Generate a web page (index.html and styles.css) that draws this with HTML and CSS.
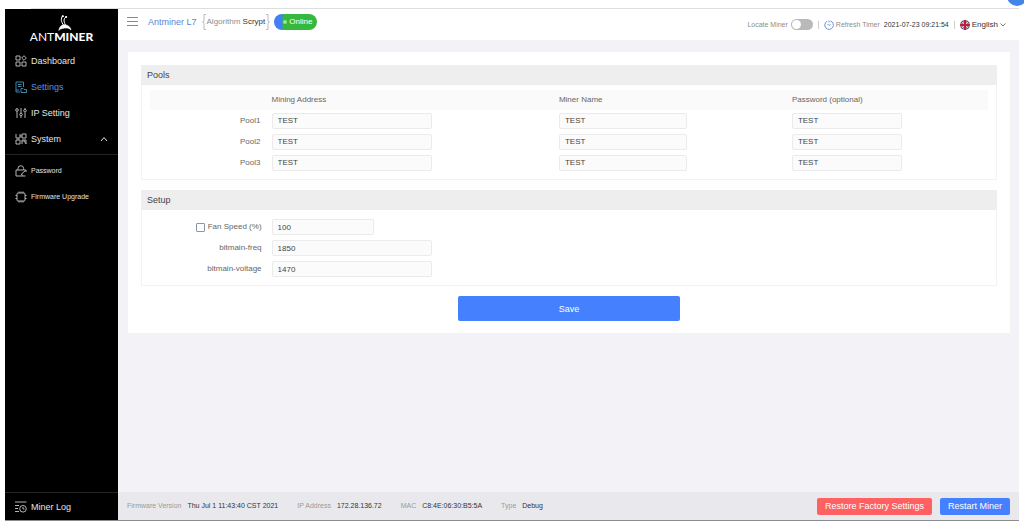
FILE: index.html
```html
<!DOCTYPE html>
<html lang="en">
<head>
<meta charset="utf-8">
<meta name="viewport" content="width=device-width, initial-scale=1">
<title>Antminer L7</title>
<link rel="stylesheet" href="styles.css">
</head>
<body>
<div class="browser-edge"><svg class="edge-badge" viewBox="0 0 20 20" aria-hidden="true"><circle cx="10" cy="10" r="10" fill="#4285e8"/><path d="M9 13l4-2" stroke="#fff" stroke-width="1.5"/></svg></div>
<div class="app">
  <aside class="sidebar">
    <div class="brand">
      <svg class="brand-ant" viewBox="0 0 14 16" fill="none" stroke="#fff" stroke-linecap="round" aria-hidden="true">
        <path d="M5.500 10C3 7 2.500 3.500 4.500 1.200M7.200 9.500C5.500 6 5.500 3.500 7.800 2" stroke-width="1"/>
        <circle cx="4.700" cy="1.200" r=".6" fill="#fff"/><circle cx="8" cy="2" r=".6" fill="#fff"/>
        <path class="body" d="M1 15c.3-3 2-4.700 4.800-5.200C9.500 9.500 12.500 12 13 15c-1.500-1.500-3-2-5-2S3 13.500 1 15z" stroke-width=".6"/>
      </svg>
      <div class="brand-name">ANT<b>MINER</b></div>
    </div>
    <nav class="menu">
      <a class="item" href="#"><svg class="icon" viewBox="0 0 12 12"><path d="M1 1h4v4H1zM1 7h4v4H1zM7 7h4v4H7zM9 .7L11.300 3 9 5.300 6.700 3z"/></svg>Dashboard</a>
      <a class="item active" href="#"><svg class="icon" viewBox="0 0 12 12"><path d="M5 11H1V1h7.500v5M3 3.500h3.500M3 5.500h3.500M1 9h3M6 7.500h2l1 1h2.500V11.500H6z"/></svg>Settings</a>
      <a class="item" href="#"><svg class="icon" viewBox="0 0 12 12"><path d="M2 4.500V11M6 1v5M6 9v2M10 5.500V11M2 1v.5M10 1v1"/><circle cx="2" cy="3" r="1.300"/><circle cx="6" cy="7.500" r="1.300"/><circle cx="10" cy="3.700" r="1.300"/></svg>IP Setting</a>
      <a class="item" href="#"><svg class="icon" viewBox="0 0 12 12"><path d="M1 1v4h4V1M7 1h4v4H7zM1 7h4v4H1zM7 11V7h4v4M3 5v2M5 3h2M7.500 9L9 7.500 11 11"/></svg>System<svg class="chevron" viewBox="0 0 8 6"><path d="M1 5l3-3.500L7 5"/></svg></a>
      <div class="submenu">
        <a class="item small" href="#"><svg class="icon" viewBox="0 0 12 12"><path d="M3 5V3.500a2.800 2.800 0 0 1 5.600 0V5M8.600 5H1v6h9.500M10.500 5.500L6 9.500M6 9.500l2 1M9 5h2v2"/></svg>Password</a>
        <a class="item small" href="#"><svg class="icon" viewBox="0 0 12 12"><rect x="2" y="2" width="8" height="8" rx="1"/><path d="M4 2V.5M6 2V.5M8 2V.5M4 11.500V10M6 11.500V10M8 11.500V10M2 4.500H.5M2 7.500H.5M11.500 4.500H10M11.500 7.500H10"/></svg>Firmware Upgrade</a>
      </div>
    </nav>
    <a class="item log" href="#"><svg class="icon" viewBox="0 0 12 12"><path d="M0 1h11.500M0 4.500h4M0 7.500h3M0 10.500h4M8 6v2h1.500"/><circle cx="8" cy="7.800" r="3.300"/></svg>Miner Log</a>
  </aside>
  <div class="page">
    <header class="topbar">
      <button class="burger" type="button" aria-label="Menu"><svg viewBox="0 0 11 9"><path d="M0 .5h11M0 4.500h11M0 8.500h11"/></svg></button>
      <a class="model" href="#">Antminer L7</a>
      <div class="algorithm">
        <svg class="brace" viewBox="0 0 4 16"><path d="M4 .5H2V7L.5 8 2 9v6.500h2"/></svg>
        <span>Algorithm <strong>Scrypt</strong></span>
        <svg class="brace" viewBox="0 0 4 16"><path d="M0 .5h2V7l1.500 1L2 9v6.500H0"/></svg>
      </div>
      <span class="status"><i class="dot"></i>Online</span>
      <div class="tools">
        <label class="locate">Locate Miner <input class="switch" type="checkbox"></label>
        <i class="bar"></i>
        <span class="timer"><svg class="clock" viewBox="0 0 10 10"><path d="M3.200 1.200A4.300 4.300 0 1 0 6.500 1M5 .5V2.500M3.500 4L5 5.500l1.500-1"/></svg><span>Refresh Timer <strong>2021-07-23 09:21:54</strong></span></span>
        <i class="bar"></i>
        <button class="language" type="button">
          <svg class="flag" viewBox="0 0 10 10"><circle cx="5" cy="5" r="5" fill="#56547d"/><path d="M1.500 1.500l7 7M8.500 1.500l-7 7" stroke="#eed5da" stroke-width="1"/><path d="M5 0v10M0 5h10" stroke="#e8b9c0" stroke-width="3"/><path d="M5 0v10M0 5h10" stroke="#bd2038" stroke-width="2"/></svg>
          English
          <svg class="arrow" viewBox="0 0 6 4"><path d="M.5.5L3 3 5.500.5"/></svg>
        </button>
      </div>
    </header>
    <main class="content">
      <form class="panel">
        <section class="card">
          <h2>Pools</h2>
          <table class="pools">
            <thead><tr><th class="col-label"></th><th class="col-address">Mining Address</th><th class="col-name">Miner Name</th><th>Password (optional)</th></tr></thead>
            <tbody>
              <tr><th scope="row">Pool1</th><td><input type="text" value="TEST" aria-label="Pool1 mining address"></td><td><input type="text" value="TEST" aria-label="Pool1 miner name"></td><td><input type="text" value="TEST" aria-label="Pool1 password"></td></tr>
              <tr><th scope="row">Pool2</th><td><input type="text" value="TEST" aria-label="Pool2 mining address"></td><td><input type="text" value="TEST" aria-label="Pool2 miner name"></td><td><input type="text" value="TEST" aria-label="Pool2 password"></td></tr>
              <tr><th scope="row">Pool3</th><td><input type="text" value="TEST" aria-label="Pool3 mining address"></td><td><input type="text" value="TEST" aria-label="Pool3 miner name"></td><td><input type="text" value="TEST" aria-label="Pool3 password"></td></tr>
            </tbody>
          </table>
        </section>
        <section class="card">
          <h2>Setup</h2>
          <div class="fields">
            <label class="fan" for="fan"><input class="tick" type="checkbox" aria-label="Set fan speed">Fan Speed (%)</label><input class="short" id="fan" type="text" value="100">
            <label for="freq">bitmain-freq</label><input id="freq" type="text" value="1850">
            <label for="voltage">bitmain-voltage</label><input id="voltage" type="text" value="1470">
          </div>
        </section>
        <button class="save" type="button">Save</button>
      </form>
    </main>
    <footer class="footer">
      <span>Firmware Version <strong>Thu Jul 1 11:43:40 CST 2021</strong></span>
      <span>IP Address <strong>172.28.136.72</strong></span>
      <span>MAC <strong>C8:4E:06:30:B5:5A</strong></span>
      <span>Type <strong>Debug</strong></span>
      <div class="actions">
        <button class="danger" type="button">Restore Factory Settings</button>
        <button class="primary" type="button">Restart Miner</button>
      </div>
    </footer>
  </div>
</div>
</body>
</html>
```
FILE: styles.css
```css
* { box-sizing: border-box; }
body {
  margin: 0;
  height: 100vh;
  padding: 0 5px 10px;
  display: flex;
  flex-direction: column;
  overflow: hidden;
  background: #fff;
  font: 9px/12px "Liberation Sans", Arial, sans-serif;
  color: #666;
}
a { color: inherit; text-decoration: none; }
button, input { font: inherit; color: inherit; margin: 0; }
button { border: 0; padding: 0; background: none; }
svg { fill: none; stroke: currentColor; flex: none; display: block; }
strong { font-weight: 400; color: #333; }

.browser-edge { position: relative; flex: 0 0 9px; margin-left: 26px; border-bottom: 1px solid #dedee2; }
.edge-badge { position: absolute; right: -8px; bottom: 2px; width: 20px; height: 20px; stroke: none; }

.app { flex: 1; min-height: 0; display: flex; border-bottom: 1px solid #8c8c90; }
.sidebar { flex: 0 0 113px; display: flex; flex-direction: column; background: #000; color: #e4e4e4; }
.brand { height: 39px; padding-top: 6px; display: flex; flex-direction: column; align-items: center; color: #fff; }
.brand-ant { width: 14px; height: 16px; margin-left: 6px; }
.brand-ant .body { fill: #fff; }
.brand-name { font: 12px/12px Lato, sans-serif; }
.brand-name b { font-weight: 900; }
.menu { flex: 1; }
.item { display: flex; align-items: center; gap: 4px; height: 26px; padding: 0 10px; }
.item .icon { width: 12px; height: 12px; stroke-width: 1; color: #b4b4b4; }
.active { color: #5792ef; }
.active .icon { color: #3d86a4; }
.chevron { width: 8px; height: 6px; margin-left: auto; }
.submenu { margin-top: 2px; border-top: 1px solid #242424; padding-top: 3px; }
.small { font-size: 7px; }
.log { height: 28px; border-top: 1px solid #242424; }

.page { flex: 1; min-width: 0; display: flex; flex-direction: column; background: #f3f3f7; }
.topbar { flex: 0 0 31px; display: flex; align-items: center; padding: 0 13px 6px 9px; background: #fff; color: #8d8d8d; font-size: 8px; }
.burger { color: #888; }
.burger svg { width: 11px; height: 9px; stroke-width: 1; }
.model { margin-left: 10px; font-size: 9px; color: #5c83d4; }
.algorithm { display: flex; align-items: center; gap: 1px; margin-left: 5px; }
.brace { width: 4px; height: 16px; color: #bbb; }
.status { display: flex; align-items: center; gap: 2px; height: 16px; margin-left: 4px; padding: 0 5px 0 9px; border-radius: 8px; background: linear-gradient(90deg, #4480f4 8px, #35b83d 9px); color: #fff; }
.dot { width: 4px; height: 4px; border-radius: 50%; background: #8bea92; }
.tools { margin-left: auto; padding-top: 6px; display: flex; align-items: center; gap: 5px; font-size: 7px; }
.locate { display: flex; align-items: center; gap: 3px; }
.switch { appearance: none; width: 22px; height: 11px; padding: 1px; border-radius: 6px; background: #b9b9b9; }
.switch::before { content: ""; display: block; width: 9px; height: 9px; border-radius: 50%; background: #fff; }
.bar { width: 1px; height: 8px; background: #ccc; }
.timer { display: flex; align-items: center; gap: 2px; }
.timer strong { margin-left: 2px; }
.clock { width: 10px; height: 10px; color: #6d8fd8; }
.language { display: flex; align-items: center; gap: 2px; font-size: 8px; color: #333; }
.flag { width: 10px; height: 10px; stroke: none; }
.arrow { width: 6px; height: 4px; color: #777; }

.content { flex: 1; min-height: 0; padding: 12px 9px 12px 10px; }
.panel { padding: 13px 13px 12px; background: #fff; display: flex; flex-direction: column; }
.card { border: 1px solid #f3f3f3; border-top: 0; margin-bottom: 10px; }
.card h2 { margin: 0 -1px; padding: 0 6px; font-size: 9px; line-height: 20px; font-weight: 400; background: #eee; color: #444; }
.pools { width: calc(100% - 16px); margin: 5px 8px 6px; table-layout: fixed; border-collapse: collapse; font-size: 8px; }
.pools th { padding: 0; font-weight: 400; text-align: left; }
.pools thead th { height: 20px; background: #fafafa; }
.pools tbody th { padding-right: 11px; text-align: right; }
.pools td { padding: 0; height: 21px; }
.pools td input { display: block; width: 56%; }
.pools td:nth-child(3) input { width: 55%; }
.col-label { width: 14.5%; }
.col-address { width: 34.3%; }
.col-name { width: 27.8%; }
input[type="text"] { height: 16px; padding: 0 5px; border: 1px solid #ebebeb; border-radius: 2px; background: #fbfbfb; font-size: 8px; color: #444; }
.fields { display: grid; grid-template-columns: 14% 19%; column-gap: 10px; row-gap: 5px; align-items: center; padding: 9px 0 8px; font-size: 8px; }
.fields input[type="text"] { width: 99%; }
.fields label { text-align: right; }
.fan { display: flex; align-items: center; justify-content: flex-end; gap: 3px; }
.tick { appearance: none; width: 9px; height: 9px; border: 1px solid #8795a8; border-radius: 1px; background: #fff; }
.fields input.short { width: 63%; }
.save { align-self: center; width: 26%; height: 25px; border-radius: 2px; background: #4580ff; color: #fff; }

.footer { flex: 0 0 28px; display: flex; align-items: center; gap: 19px; padding: 0 9px; background: #e9e9ed; color: #999; font-size: 7px; }
.footer strong { margin-left: 4px; }
.actions { display: flex; gap: 8px; margin-left: auto; font-size: 9px; }
.actions button { height: 17px; padding: 0 8px; border-radius: 2px; color: #fff; }
.actions .danger { background: #ff6062; }
.actions .primary { background: #4580ff; }
```
